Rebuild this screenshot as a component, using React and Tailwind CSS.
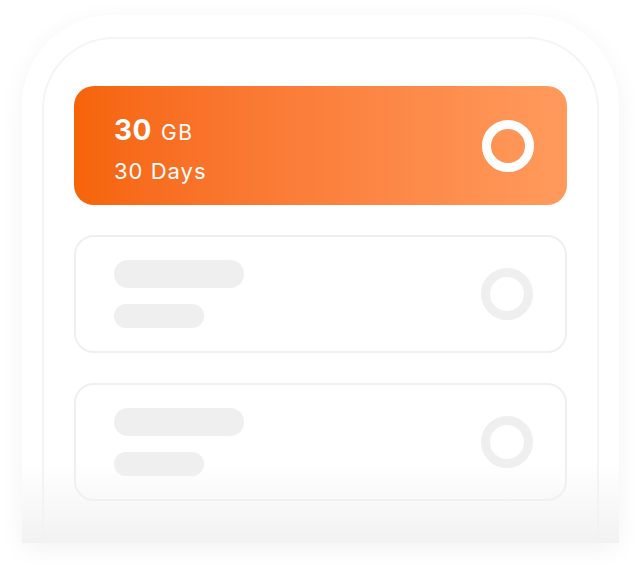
import React from 'react';

function Ring({ className }) {
  return <div className={`w-[52px] h-[52px] rounded-full border-[9px] ${className}`} />;
}

function SkeletonCard() {
  return (
    <div className="h-[118px] rounded-[20px] border-2 border-[#efefef] bg-white flex items-center justify-between pl-[38px] pr-[32px]">
      <div className="flex flex-col gap-4">
        <div className="w-[130px] h-[28px] rounded-full bg-[#efefef]" />
        <div className="w-[90px] h-[24px] rounded-full bg-[#efefef]" />
      </div>
      <Ring className="border-[#efefef]" />
    </div>
  );
}

export default function App() {
  return (
    <div className="w-[642px] h-[572px] bg-white pt-[15px] pl-[22px] overflow-hidden" style={{ fontFamily: 'Inter, "Noto Sans", sans-serif' }}>
      <div className="relative w-[597px] h-[528px] rounded-t-[90px] bg-white shadow-[0_6px_26px_rgba(0,0,0,0.05)] px-[20px] pt-[22px]">
        <div className="h-full rounded-t-[72px] border-2 border-b-0 border-[#f4f4f4] px-[30px] pt-[47px] flex flex-col gap-[30px]">
          <div className="h-[119px] rounded-[20px] bg-gradient-to-r from-[#f66407] to-[#ff9a5c] flex items-center justify-between pl-[40px] pr-[33px] text-white">
            <div className="flex flex-col gap-[16px] pt-[6px]">
              <div className="flex items-baseline gap-[9px] leading-none">
                <span className="text-[28px] font-bold tracking-[0.5px]">30</span>
                <span className="text-[21px] tracking-[1.5px]">GB</span>
              </div>
              <div className="text-[22px] leading-none tracking-[1px]">30 Days</div>
            </div>
            <Ring className="border-white" />
          </div>
          <SkeletonCard />
          <SkeletonCard />
        </div>
        <div className="absolute left-0 right-0 bottom-0 h-[80px] bg-gradient-to-b from-[rgba(243,243,243,0)] to-[#f2f2f2] pointer-events-none" />
      </div>
    </div>
  );
}
